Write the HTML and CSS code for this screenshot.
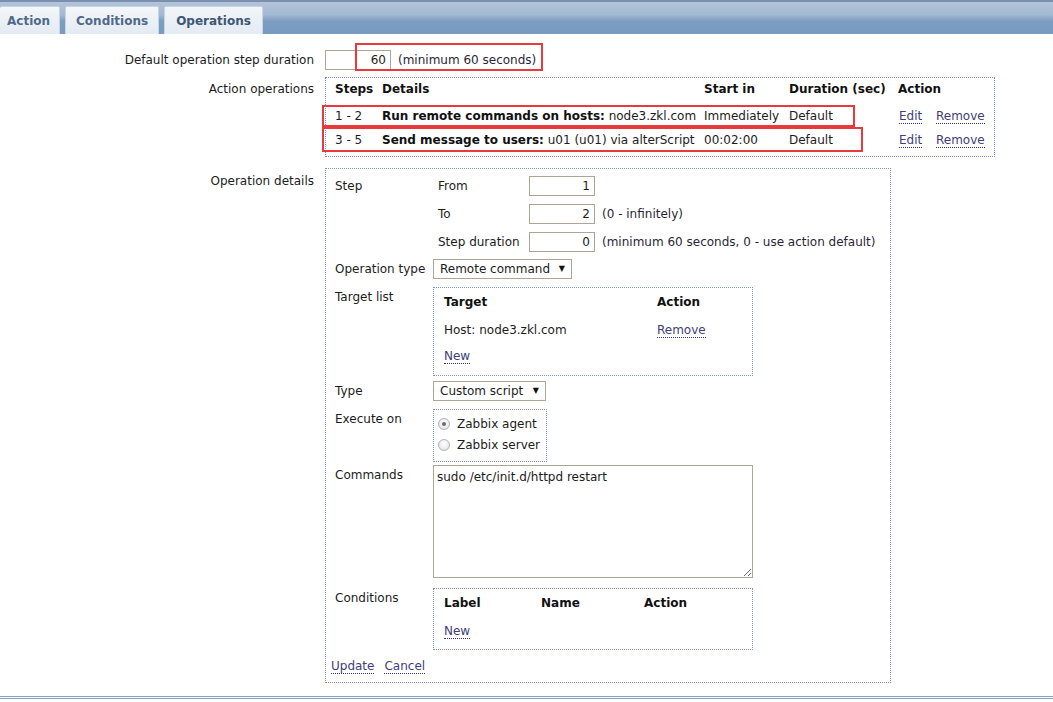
FILE: index.html
```html
<!DOCTYPE html>
<html>
<head>
<meta charset="utf-8">
<link rel="stylesheet" href="styles.css">
</head>
<body>
<div class="tabbar">
  <div class="tab">Action</div>
  <div class="tab">Conditions</div>
  <div class="tab active">Operations</div>
</div>

<div class="form">
  <div class="row r-duration">
    <div class="lbl">Default operation step duration</div>
    <div class="val inline">
      <span class="input w66">60</span>
      <span class="hint">(minimum 60 seconds)</span>
      <span class="mark mark-dur"></span>
    </div>
  </div>

  <div class="row r-ops">
    <div class="lbl">Action operations</div>
    <div class="val">
      <div class="box ops">
        <div class="ops-row head">
          <span>Steps</span><span>Details</span><span>Start in</span><span>Duration (sec)</span><span>Action</span>
        </div>
        <div class="ops-row">
          <span>1 - 2</span><span><b>Run remote commands on hosts:</b> node3.zkl.com</span><span>Immediately</span><span>Default</span>
          <span class="acts"><span><a>Edit</a></span><span><a>Remove</a></span></span>
        </div>
        <div class="ops-row">
          <span>3 - 5</span><span><b>Send message to users:</b> u01 (u01) via alterScript</span><span>00:02:00</span><span>Default</span>
          <span class="acts"><span><a>Edit</a></span><span><a>Remove</a></span></span>
        </div>
        <span class="mark mark-op1"></span>
        <span class="mark mark-op2"></span>
      </div>
    </div>
  </div>

  <div class="row r-details">
    <div class="lbl">Operation details</div>
    <div class="val">
      <div class="box details">
        <div class="drow">
          <div class="dlbl">Step</div>
          <div class="steps">
            <div class="srow"><span class="slbl">From</span><span class="input w66">1</span></div>
            <div class="srow"><span class="slbl">To</span><span class="input w66">2</span><span class="hint">(0 - infinitely)</span></div>
            <div class="srow"><span class="slbl">Step duration</span><span class="input w66">0</span><span class="hint">(minimum 60 seconds, 0 - use action default)</span></div>
          </div>
        </div>

        <div class="drow g7">
          <div class="dlbl">Operation type</div>
          <div><span class="select w139">Remote command<span class="arrow">&#9660;</span></span></div>
        </div>

        <div class="drow g8">
          <div class="dlbl">Target list</div>
          <div><div class="box sub target">
            <div class="trow head"><span>Target</span><span>Action</span></div>
            <div class="trow mt8"><span>Host: node3.zkl.com</span><span><a>Remove</a></span></div>
            <div class="trow mt6"><span><a>New</a></span></div>
          </div></div>
        </div>

        <div class="drow g5">
          <div class="dlbl">Type</div>
          <div><span class="select w113">Custom script<span class="arrow">&#9660;</span></span></div>
        </div>

        <div class="drow g8">
          <div class="dlbl">Execute on</div>
          <div><div class="box radios">
            <label class="radio"><span class="dot checked"></span>Zabbix agent</label>
            <label class="radio"><span class="dot"></span>Zabbix server</label>
          </div></div>
        </div>

        <div class="drow g3">
          <div class="dlbl">Commands</div>
          <div><textarea class="cmd">sudo /etc/init.d/httpd restart</textarea></div>
        </div>

        <div class="drow g10">
          <div class="dlbl">Conditions</div>
          <div><div class="box sub conds">
            <div class="crow head"><span>Label</span><span>Name</span><span>Action</span></div>
            <div class="crow mt8"><span><a>New</a></span></div>
          </div></div>
        </div>

        <div class="buttons"><a>Update</a><a>Cancel</a></div>
      </div>
    </div>
  </div>
</div>

<div class="footer"></div>
</body>
</html>
```

FILE: styles.css
```css
html, body {
  margin: 0;
  padding: 0;
  background: #ffffff;
}
body {
  font-family: "DejaVu Sans", Verdana, sans-serif;
  font-size: 12px;
  color: #1c1c1c;
  width: 1053px;
  height: 702px;
  overflow: hidden;
}
b { font-weight: bold; color: #111; }
a {
  color: #3e3e7a;
  text-decoration: none;
  border-bottom: 1px dotted #2d2d8c;
  line-height: 14px;
}

/* tab bar */
.tabbar {
  height: 32px;
  border-top: 2px solid #7a90ae;
  background: linear-gradient(#b2c4d9 0%, #a4b9d2 40%, #8aa7c8 52%, #7b9dc1 60%, #789bbf 100%);
  display: flex;
  align-items: flex-end;
  gap: 5px;
}
.tab {
  height: 28px;
  line-height: 28px;
  padding: 0 10px;
  background: linear-gradient(#f4f7fa, #e3eaf2);
  border: 1px solid #c8d5e3;
  border-bottom: none;
  border-radius: 2px 2px 0 0;
  font-family: "DejaVu Sans", sans-serif;
  font-weight: bold;
  font-size: 12px;
  color: #50698a;
  box-sizing: border-box;
}
.tab:first-child { padding: 0 9px 0 7px; border-left: none; }
.tab.active {
  background: linear-gradient(#f1f5f9, #e4ebf3);
  color: #3e5673;
  padding: 0 11px;
}

/* form */
.form {
  padding-top: 16px;
}
.row {
  display: grid;
  grid-template-columns: 314px 1fr;
  column-gap: 11px;
}
.r-ops { margin-top: 7px; }
.r-details { margin-top: 11px; }
.lbl {
  text-align: right;
  line-height: 20px;
}
.r-ops .lbl { padding-top: 2px; }
.r-details .lbl { padding-top: 3px; }
.val { position: relative; }
.inline {
  display: flex;
  align-items: center;
  gap: 7px;
  height: 20px;
}
.input {
  display: inline-block;
  box-sizing: border-box;
  height: 20px;
  line-height: 18px;
  border: 1px solid #aba797;
  text-align: right;
  padding: 0 4px;
  background: #fff;
}
.w66 { width: 66px; }
.hint { color: #2a1f35; }

.box {
  border: 1px dotted #7c8fc6;
  box-sizing: border-box;
  position: relative;
}

/* operations table */
.ops {
  width: 670px;
  padding: 0 9px 4px 9px;
}
.ops-row {
  display: grid;
  grid-template-columns: 47px 322px 85px 109px 1fr;
  height: 24px;
  line-height: 24px;
  white-space: nowrap;
}
.ops-row.head {
  font-weight: bold;
  color: #111;
  height: 26px;
  line-height: 22px;
}
.acts { display: grid; grid-template-columns: 37px auto; padding-left: 1px; }

.mark {
  position: absolute;
  border: 2px solid #e8393c;
  box-sizing: border-box;
  pointer-events: none;
}
.mark-dur { left: 30px; top: -7px; width: 188px; height: 28px; }
.mark-op1 { left: -4px; top: 27px; width: 533px; height: 22px; }
.mark-op2 { left: -4px; top: 49px; width: 541px; height: 25px; }

/* operation details */
.details {
  width: 566px;
  padding: 7px 10px 6px 5px;
}
.drow {
  display: grid;
  grid-template-columns: 98px 1fr;
  padding-left: 4px;
}
.g3 { margin-top: 3px; }
.g5 { margin-top: 5px; }
.g7 { margin-top: 7px; }
.g8 { margin-top: 8px; }
.g10 { margin-top: 10px; }
.mt6 { margin-top: 6px; }
.mt8 { margin-top: 8px; }
.dlbl { line-height: 20px; }
.steps {
  display: flex;
  flex-direction: column;
  gap: 8px;
  padding-left: 5px;
}
.srow {
  display: flex;
  align-items: center;
  height: 20px;
  white-space: nowrap;
}
.slbl { width: 91px; }
.srow .hint { margin-left: 7px; }

.select {
  display: inline-flex;
  align-items: center;
  justify-content: space-between;
  box-sizing: border-box;
  height: 20px;
  border: 1px solid #aba797;
  padding: 0 6px 0 6px;
  background: #fff;
}
.w139 { width: 139px; }
.w113 { width: 113px; }
.arrow { font-size: 8px; color: #111; position: relative; top: -1px; }

.sub { width: 320px; }
.target { padding: 4px 10px 9px 10px; }
.trow {
  display: grid;
  grid-template-columns: 213px 1fr;
  line-height: 20px;
  height: 20px;
}
.trow.head, .crow.head { font-weight: bold; color: #111; }

.radios {
  width: 114px;
  padding: 3px 4px 6px 4px;
}
.radio {
  display: flex;
  align-items: center;
  height: 21px;
  gap: 7px;
}
.dot {
  width: 12px;
  height: 12px;
  flex: none;
  box-sizing: border-box;
  border-radius: 50%;
  border: 1px solid #b4b4b4;
  background: radial-gradient(circle at 50% 40%, #ffffff 0%, #ececec 60%, #d6d6d6 100%);
  position: relative;
}
.dot.checked::after {
  content: "";
  position: absolute;
  left: 3px; top: 3px;
  width: 4px; height: 4px;
  border-radius: 50%;
  background: #6b6b6b;
}

.cmd {
  display: block;
  width: 320px;
  height: 113px;
  box-sizing: border-box;
  margin: 0;
  border: 1px solid #aba797;
  padding: 3px 3px;
  font-family: "DejaVu Sans", Verdana, sans-serif;
  font-size: 12px;
  line-height: 16px;
  color: #1c1c1c;
  resize: both;
  outline: none;
}

.conds { padding: 4px 10px 8px 10px; }
.crow {
  display: grid;
  grid-template-columns: 97px 103px 1fr;
  line-height: 20px;
  height: 20px;
}

.buttons {
  margin-top: 6px;
  display: flex;
  gap: 10px;
  line-height: 20px;
  height: 20px;
  align-items: center;
}

.footer {
  margin-top: 13px;
  height: 1px;
  border-top: 1px solid #87a0c0;
  border-bottom: 1px solid #87a0c0;
}
```
